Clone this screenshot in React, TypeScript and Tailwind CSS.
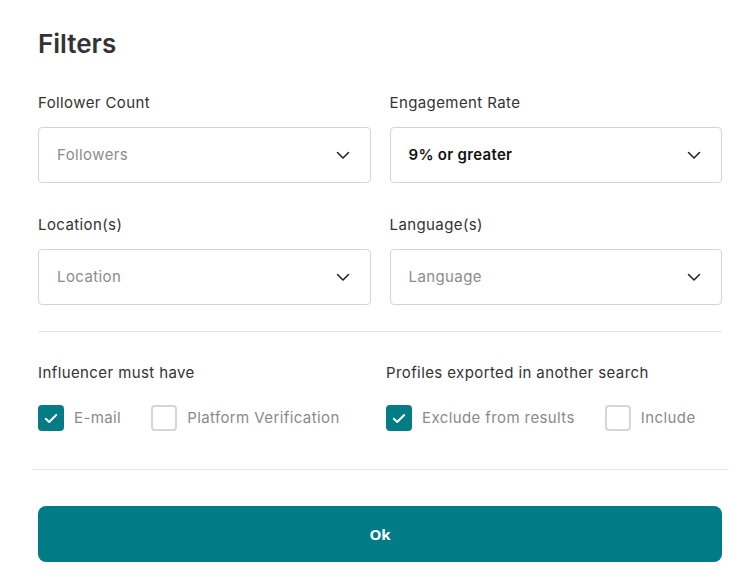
import React, { useState } from 'react';

const font = { fontFamily: 'Inter, "Noto Sans", sans-serif' };

const Chevron = () => (
  <svg width="14" height="9" viewBox="0 0 14 9" fill="none" className="shrink-0">
    <path d="M1.5 1.5L7 7L12.5 1.5" stroke="#1f1f1f" strokeWidth="1.5" strokeLinecap="round" strokeLinejoin="round" />
  </svg>
);

interface SelectProps {
  label: string;
  placeholder: string;
  value?: string;
}

const SelectField: React.FC<SelectProps> = ({ label, placeholder, value }) => (
  <div>
    <label className="block text-[15px] leading-5 tracking-[0.4px] text-[#333333]">{label}</label>
    <div className="mt-[14px] flex h-[56px] items-center justify-between rounded-[4px] border border-[#d4d4d4] bg-white pl-[18px] pr-[20px]">
      {value ? (
        <span className="text-[15px] font-semibold tracking-[0.3px] text-[#111111]">{value}</span>
      ) : (
        <span className="text-[15px] tracking-[0.4px] text-[#8c8c8c]">{placeholder}</span>
      )}
      <Chevron />
    </div>
  </div>
);

const Check: React.FC<{ label: string; checked: boolean; onToggle: () => void }> = ({ label, checked, onToggle }) => (
  <button type="button" onClick={onToggle} className="flex items-center gap-[10px]">
    <span
      className={`flex h-[26px] w-[26px] items-center justify-center rounded-[4px] ${
        checked ? 'bg-[#037c86]' : 'border-2 border-[#d6d6d6] bg-white'
      }`}
    >
      {checked && (
        <svg width="14" height="11" viewBox="0 0 14 11" fill="none">
          <path d="M1.8 5.8L5.2 9L12.2 2" stroke="white" strokeWidth="2" strokeLinecap="round" strokeLinejoin="round" />
        </svg>
      )}
    </span>
    <span className="text-[15px] tracking-[0.4px] text-[#8a8a8a]">{label}</span>
  </button>
);

export default function App() {
  const [email, setEmail] = useState(true);
  const [verified, setVerified] = useState(false);
  const [exclude, setExclude] = useState(true);
  const [include, setInclude] = useState(false);

  return (
    <div className="min-h-[588px] w-[745px] bg-white pl-[38px] pr-[23px] pt-[26px]" style={font}>
      <h1 className="text-[26px] font-semibold leading-[36px] text-[#333333]">Filters</h1>

      <div className="mt-[31px] grid grid-cols-2 gap-x-[19px] gap-y-[32px]">
        <SelectField label="Follower Count" placeholder="Followers" />
        <SelectField label="Engagement Rate" placeholder="Rate" value="9% or greater" />
        <SelectField label="Location(s)" placeholder="Location" />
        <SelectField label="Language(s)" placeholder="Language" />
      </div>

      <div className="mt-[26px] h-px bg-[#e6e6e6]" />

      <div className="mt-[31px] flex">
        <div className="w-[348px]">
          <p className="text-[15px] leading-5 tracking-[0.4px] text-[#333333]">Influencer must have</p>
          <div className="mt-[22px] flex gap-[30px]">
            <Check label="E-mail" checked={email} onToggle={() => setEmail(!email)} />
            <Check label="Platform Verification" checked={verified} onToggle={() => setVerified(!verified)} />
          </div>
        </div>
        <div>
          <p className="text-[15px] leading-5 tracking-[0.4px] text-[#333333]">Profiles exported in another search</p>
          <div className="mt-[22px] flex gap-[30px]">
            <Check label="Exclude from results" checked={exclude} onToggle={() => setExclude(!exclude)} />
            <Check label="Include" checked={include} onToggle={() => setInclude(!include)} />
          </div>
        </div>
      </div>

      <div className="-ml-[6px] -mr-[7px] mt-[38px] h-px bg-[#e6e6e6]" />

      <button
        type="button"
        className="mt-[36px] flex h-[56px] w-full items-center justify-center rounded-[8px] bg-[#017b85] text-[15px] font-bold text-white"
        style={{ fontFamily: '"Open Sans", "Noto Sans", sans-serif' }}
      >
        Ok
      </button>
    </div>
  );
}
